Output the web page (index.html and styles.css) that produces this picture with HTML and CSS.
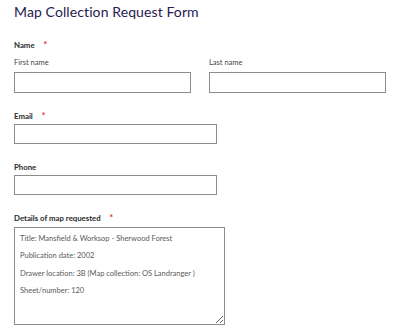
FILE: index.html
```html
<!DOCTYPE html>
<html>
<head>
<meta charset="utf-8">
<link rel="stylesheet" href="styles.css">
</head>
<body>
<div class="page">
  <h1 class="title">Map Collection Request Form</h1>

  <div class="field field-first">
    <div class="label">Name <span class="req">*</span></div>
    <div class="name-row">
      <div class="sub">
        <div class="sublabel">First name</div>
        <input class="input input-half" type="text">
      </div>
      <div class="sub">
        <div class="sublabel">Last name</div>
        <input class="input input-half" type="text">
      </div>
    </div>
  </div>

  <div class="field">
    <div class="label">Email <span class="req">*</span></div>
    <input class="input input-mid" type="text">
  </div>

  <div class="field">
    <div class="label">Phone</div>
    <input class="input input-mid" type="text">
  </div>

  <div class="field">
    <div class="label label-ta">Details of map requested <span class="req">*</span></div>
    <textarea class="textarea">Title: Mansfield &amp; Worksop - Sherwood Forest
Publication date: 2002
Drawer location: 3B (Map collection: OS Landranger )
Sheet/number: 120</textarea>
  </div>
</div>
</body>
</html>
```

FILE: styles.css
```css
html, body {
  margin: 0;
  padding: 0;
  background: #ffffff;
}

.page {
  padding: 3px 14px 0 14px;
  font-family: Lato, "Open Sans", sans-serif;
  display: flex;
  flex-direction: column;
}

.title {
  margin: 0;
  font-size: 14px;
  line-height: 18px;
  font-weight: 400;
  color: #1f2050;
  letter-spacing: 0.1px;
}

.field {
  display: flex;
  flex-direction: column;
  margin-top: 18px;
}

.field-first {
  margin-top: 19px;
}

.label {
  font-size: 7.8px;
  line-height: 10px;
  font-weight: 700;
  color: #2a2a2a;
  margin-bottom: 3px;
}

.label-ta {
  margin-bottom: 4px;
}

.req {
  color: #e3262b;
  margin-left: 7px;
  font-size: 8.5px;
}

.name-row {
  display: flex;
  gap: 18px;
  margin-top: 5px;
}

.sub {
  display: flex;
  flex-direction: column;
}

.sublabel {
  font-size: 7.5px;
  line-height: 10px;
  color: #444;
  margin-bottom: 4px;
}

.input {
  box-sizing: border-box;
  height: 21px;
  margin: 0;
  border: 1px solid #8c8c8c;
  border-radius: 0;
  background: #fff;
  padding: 0 4px;
}

.input-half {
  width: 177px;
}

.input-mid {
  width: 203px;
  height: 20px;
}

.textarea {
  box-sizing: border-box;
  width: 211px;
  height: 98px;
  margin: 0;
  border: 1px solid #8c8c8c;
  border-radius: 0;
  padding: 2px 5px 0 5px;
  font-family: Lato, "Open Sans", sans-serif;
  font-size: 7.5px;
  line-height: 17.3px;
  color: #5a5a5a;
  background: #fff;
  overflow: hidden;
}
```
